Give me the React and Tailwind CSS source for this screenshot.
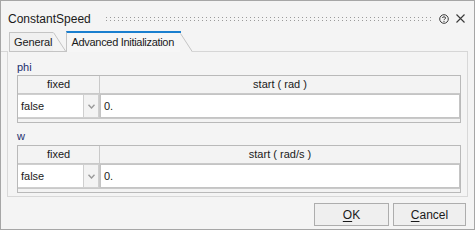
import React from 'react'

function Dots() {
  return (
    <svg className="flex-1 h-[4px]" aria-hidden="true">
      <defs>
        <pattern id="grip" width="4" height="4" patternUnits="userSpaceOnUse">
          <rect x="0" y="0" width="1" height="1" fill="#9a9a9a" />
          <rect x="0" y="3" width="1" height="1" fill="#9a9a9a" />
        </pattern>
      </defs>
      <rect width="100%" height="4" fill="url(#grip)" />
    </svg>
  )
}

function Slant({ h }) {
  return (
    <svg width="13" height={h} className="block shrink-0" aria-hidden="true">
      <line x1="0.5" y1="0.5" x2="12.5" y2={h} stroke="#c4c4c4" strokeWidth="1" />
    </svg>
  )
}

function ParamTable({ unit }) {
  return (
    <div className="ml-[8px] w-[444px] border border-[#b9b9b9] bg-[#f3f3f3] text-[11px] text-[#1a1a1a]">
      {/* header */}
      <div className="flex h-[18px] border-b border-[#c9c9c9]">
        <div className="w-[82px] border-r border-[#c9c9c9] flex items-center justify-center">fixed</div>
        <div className="flex-1 flex items-center justify-center">start ( {unit} )</div>
      </div>
      {/* values */}
      <div className="flex h-[25px] border-b border-[#c9c9c9]">
        <div className="w-[82px] flex border-r border-[#c9c9c9]">
          <div className="w-[66px] bg-white border-y border-r border-[#cfcfcf] flex items-center pl-[3px]">false</div>
          <div className="w-[15px] border-y border-r border-[#cfcfcf] flex items-center justify-center">
            <svg width="7" height="5" viewBox="0 0 7 5" aria-hidden="true">
              <path d="M0.5 0.8 L3.5 4 L6.5 0.8" fill="none" stroke="#9a9a9a" strokeWidth="1.4" />
            </svg>
          </div>
        </div>
        <div className="flex-1 bg-white border border-[#c4c4c4] flex items-center pl-[3px]">0.</div>
      </div>
      <div className="h-[3px]" />
    </div>
  )
}

export default function App() {
  return (
    <div className="w-[476px] h-[231px] bg-white">
      <div className="w-[475px] h-[230px] border border-[#a6a6a6] bg-[#f4f4f4] flex flex-col font-['Liberation_Sans',sans-serif] text-[#1a1a1a]">
        {/* Title bar */}
        <div className="h-[29px] flex items-center pl-[7px] pr-[9px] pt-[6px]">
          <span className="text-[12px] leading-none">ConstantSpeed</span>
          <div className="flex-1 flex items-center ml-[15px] mr-[8px]">
            <Dots />
          </div>
          <svg width="10" height="10" viewBox="0 0 10 10" className="mr-[7px]" aria-hidden="true">
            <circle cx="5" cy="5" r="4.3" fill="none" stroke="#3a3a3a" strokeWidth="1" />
            <path d="M3.4 4 C3.4 2.4 6.6 2.4 6.6 4 C6.6 5 5 5 5 6.2" fill="none" stroke="#3a3a3a" strokeWidth="1" />
            <rect x="4.5" y="7" width="1" height="1" fill="#3a3a3a" />
          </svg>
          <svg width="9" height="9" viewBox="0 0 9 9" aria-hidden="true">
            <path d="M0.5 0.5 L8.5 8.5 M8.5 0.5 L0.5 8.5" stroke="#3a3a3a" strokeWidth="1.1" />
          </svg>
        </div>

        {/* Tabs */}
        <div className="h-[22px] flex items-end">
          <div className="w-[7px] h-[1px] bg-[#d6d6d6]" />
          <div className="flex items-end border-b border-[#c4c4c4] ml-[1px]">
            <div className="h-[19px] border-l border-t border-[#c4c4c4] bg-[#f0f0f0] pl-[4px] pr-[1px] flex items-center text-[11px] tracking-[-0.1px]">
              General
            </div>
            <Slant h={19} />
          </div>
          <div className="flex items-end">
            <div className="h-[21px] border-l border-[#c4c4c4] border-t-2 border-t-[#1a7fcf] pl-[4px] pr-[6px] flex items-center text-[11px] tracking-[-0.3px] bg-[#f6f6f6]">
              Advanced Initialization
            </div>
            <div className="h-[21px] flex flex-col">
              <div className="h-[2px] w-[1px] bg-[#1a7fcf]" />
              <Slant h={19} />
            </div>
          </div>
          <div className="flex-1 h-[1px] bg-[#d6d6d6] mr-[6px]" />
        </div>

        {/* Panel */}
        <div className="mx-[6px] h-[145px] border-x border-b border-[#d8d8d8] flex flex-col pt-[9px] pl-[1px]">
          <div className="ml-[8px] h-[13px] leading-[13px] text-[11px] text-[#1c2f6e]">phi</div>
          <div className="mt-[1px]">
            <ParamTable unit="rad" />
          </div>
          <div className="ml-[8px] mt-[7px] h-[13px] leading-[13px] text-[11px] text-[#1c2f6e]">w</div>
          <div className="mt-[2px]">
            <ParamTable unit="rad/s" />
          </div>
        </div>

        {/* Buttons */}
        <div className="flex justify-end gap-[4px] pt-[6px] pr-[8px]">
          <button className="w-[75px] h-[23px] border border-[#adadad] bg-[#efefef] text-[12px] text-[#1a1a1a]">
            <span className="underline underline-offset-2">O</span>K
          </button>
          <button className="w-[73px] h-[23px] border border-[#adadad] bg-[#efefef] text-[12px] text-[#1a1a1a]">
            <span className="underline underline-offset-2">C</span>ancel
          </button>
        </div>
      </div>
    </div>
  )
}
